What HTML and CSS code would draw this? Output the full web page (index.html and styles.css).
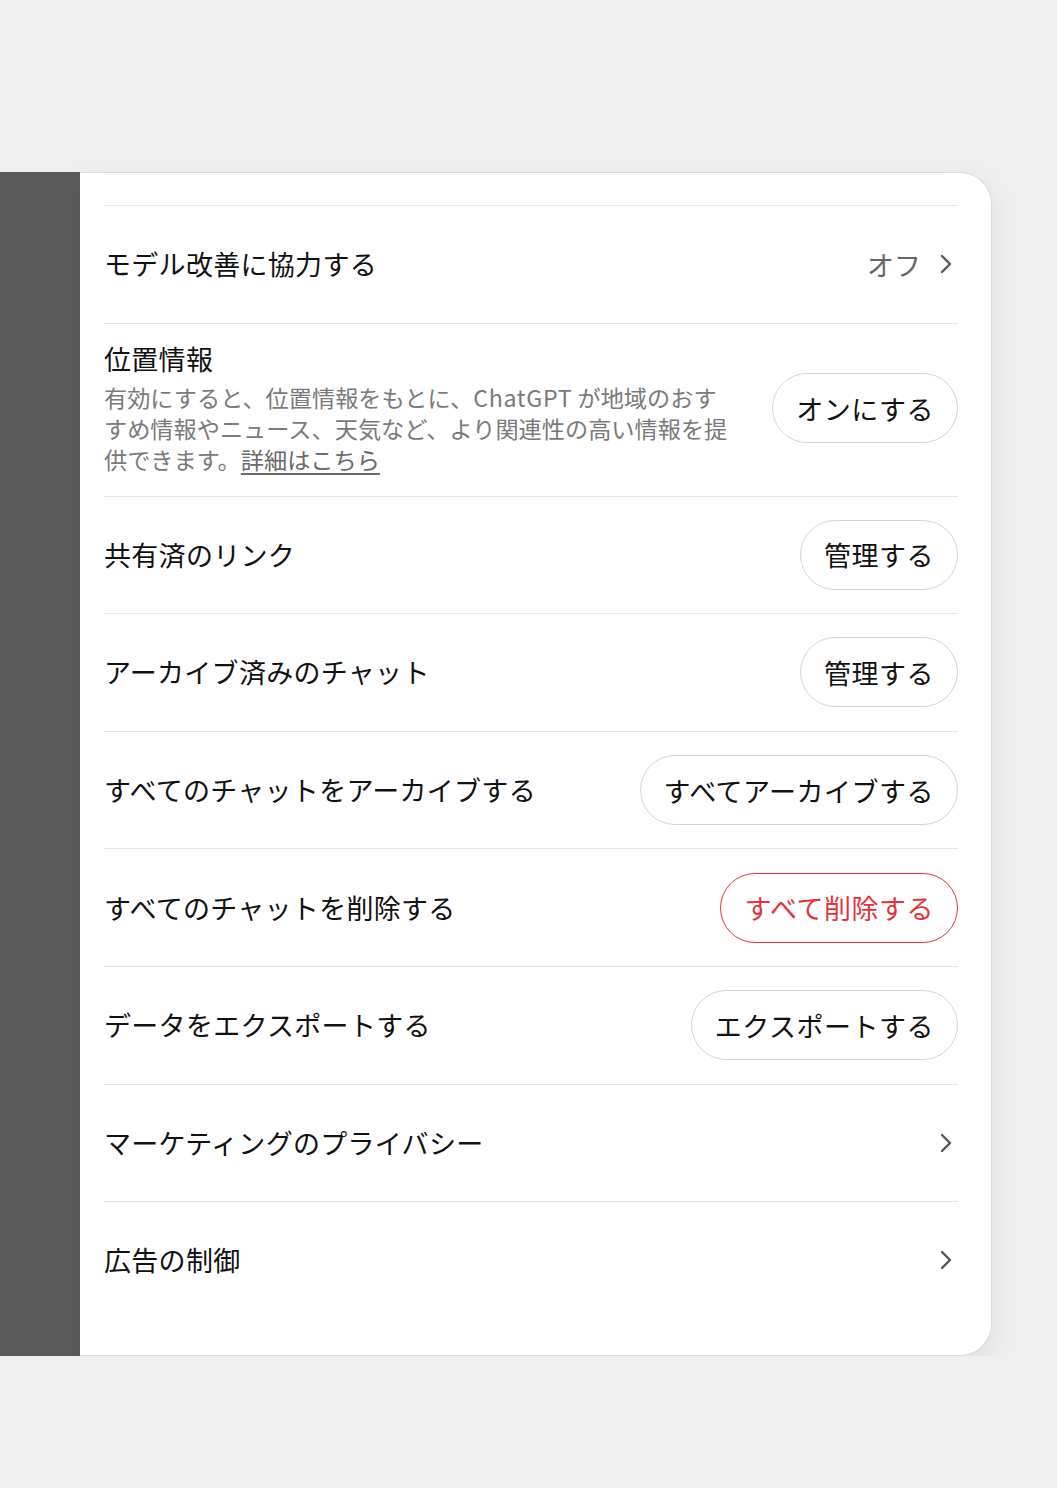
FILE: index.html
```html
<!DOCTYPE html>
<html lang="ja">
<head>
    <meta charset="UTF-8">
    <title>データ コントロール</title>

    <link rel="stylesheet" href="styles.css">
</head>
<body>

<section id="main">
    <div class="backdrop"></div>

    <section class="card">
        <div class="row">
            <span class="label">モデル改善に協力する</span>
            <span class="value">
                オフ
                <svg class="chevron" viewBox="0 0 14 22"><path d="M3 3l8 8-8 8"/></svg>
            </span>
        </div>

        <div class="row row-tall">
            <div class="info">
                <div class="label">位置情報</div>
                <p class="desc">有効にすると、位置情報をもとに、<span class="brand">ChatGPT</span> が地域のおすすめ情報やニュース、天気など、より関連性の高い情報を提供できます。<a href="#">詳細はこちら</a></p>
            </div>
            <button class="pill">オンにする</button>
        </div>

        <div class="row">
            <span class="label">共有済のリンク</span>
            <button class="pill">管理する</button>
        </div>

        <div class="row">
            <span class="label">アーカイブ済みのチャット</span>
            <button class="pill">管理する</button>
        </div>

        <div class="row">
            <span class="label">すべてのチャットをアーカイブする</span>
            <button class="pill">すべてアーカイブする</button>
        </div>

        <div class="row">
            <span class="label">すべてのチャットを削除する</span>
            <button class="pill danger">すべて削除する</button>
        </div>

        <div class="row">
            <span class="label">データをエクスポートする</span>
            <button class="pill">エクスポートする</button>
        </div>

        <div class="row">
            <span class="label">マーケティングのプライバシー</span>
            <svg class="chevron" viewBox="0 0 14 22"><path d="M3 3l8 8-8 8"/></svg>
        </div>

        <div class="row">
            <span class="label">広告の制御</span>
            <svg class="chevron" viewBox="0 0 14 22"><path d="M3 3l8 8-8 8"/></svg>
        </div>
    </section>
</section>

</body>
</html>
```

FILE: styles.css
```css
body {
    margin: 0;
    background: #efefef;
    font-family: "Noto Sans CJK JP", "Noto Sans", sans-serif;
    color: #111;
}
#main {
    display: flex;
    padding-top: 172px;
    height: 1184px;
}
.backdrop {
    width: 80px;
    background: #5b5b5b;
}
.card {
    width: 912px;
    box-sizing: border-box;
    background: #fff;
    border: 1px solid #d9d9d9;
    border-left: none;
    border-radius: 0 32px 32px 0;
    box-shadow: 0 10px 28px rgba(0, 0, 0, 0.07);
    padding: 32px 33px 34px 24px;
}
.row {
    display: flex;
    align-items: center;
    justify-content: space-between;
    min-height: 117.6px;
    box-sizing: border-box;
    border-top: 1px solid #e6e6e6;
}
.row-tall {
    min-height: 173px;
    padding: 17px 0 20px;
}
.label {
    font-size: 27px;
    line-height: 36px;
    letter-spacing: 0.3px;
}
.info {
    width: 631px;
}
.desc {
    margin: 5px 0 0;
    font-size: 23.2px;
    line-height: 31px;
    color: #7a7a7a;
}
.brand {
    display: inline-block;
    letter-spacing: 0.7px;
}
.desc a {
    display: inline-block;
    color: #6a6a6a;
    text-decoration: underline;
    text-underline-offset: 4px;
}
.value {
    display: flex;
    align-items: center;
    gap: 18px;
    font-size: 27px;
    color: #666;
    padding-right: 5px;
}
.row > .chevron {
    margin-right: 5px;
}
.chevron {
    width: 14px;
    height: 22px;
    fill: none;
    stroke: #555;
    stroke-width: 2.4;
    stroke-linecap: round;
    stroke-linejoin: round;
}
.pill {
    height: 70px;
    padding: 0 23px;
    border: 1.5px solid #d4d4d4;
    border-radius: 35px;
    background: #fff;
    font-family: inherit;
    font-size: 27px;
    letter-spacing: 0.5px;
    color: #111;
}
.danger {
    border-color: #e3343b;
    color: #e3343b;
}
```
